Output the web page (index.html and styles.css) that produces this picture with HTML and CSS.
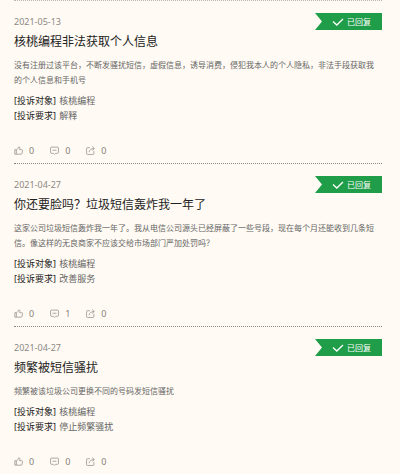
FILE: index.html
```html
<!DOCTYPE html>
<html lang="zh-CN">
<head>
<meta charset="utf-8">
<meta name="viewport" content="width=device-width, initial-scale=1">
<title>投诉列表</title>
<link rel="stylesheet" href="styles.css">
</head>
<body>
<svg class="sprite" aria-hidden="true">
  <symbol id="like" viewBox="0 0 16 16"><path d="M4 6.500H1.500v8H12.500c1 0 1.500-.5 1.700-1.500l1-4.500c.2-1.200-.4-2-1.500-2H10c.8-3 .5-5-1-5-1.200 0-1.300 1-1.600 2C6.800 5.200 5.500 6.500 4 6.500z"/><path d="M4.200 7v7"/></symbol>
  <symbol id="comment" viewBox="0 0 16 16"><path d="M2.500 2h11c.8 0 1.500.5 1.500 1.500v8c0 .8-.5 1.500-1.500 1.500H10l-2 2-2-2H2.500c-1 0-1.500-.7-1.500-1.500v-8C1 2.500 1.700 2 2.500 2zM4.500 7.500h7"/></symbol>
  <symbol id="share" viewBox="0 0 16 16"><path d="M7 3H2.500C1.500 3 1 3.500 1 4.500v9c0 1 .5 1.500 1.500 1.500h10c1 0 1.500-.5 1.500-1.500V9M5.500 11C6 7 9 4.500 14.500 4.500M11 1l3.800 3.500L11 8"/></symbol>
  <symbol id="check" viewBox="0 0 12 8"><path d="M1 3.500 4.800 7 11 1"/></symbol>
</svg>
<main class="list">
  <article class="item">
    <header class="head"><time class="date">2021-05-13</time><span class="badge"><svg class="check"><use href="#check"/></svg>已回复</span></header>
    <h2 class="title">核桃编程非法获取个人信息</h2>
    <p class="text">没有注册过该平台，不断发骚扰短信，虚假信息，诱导消费，侵犯我本人的个人隐私，非法手段获取我的个人信息和手机号</p>
    <dl class="facts">
      <div><dt>[投诉对象]</dt> <dd>核桃编程</dd></div>
      <div><dt>[投诉要求]</dt> <dd>解释</dd></div>
    </dl>
    <footer class="actions">
      <button class="action" aria-label="点赞 0"><svg class="icon"><use href="#like"/></svg>0</button>
      <button class="action" aria-label="评论 0"><svg class="icon"><use href="#comment"/></svg>0</button>
      <button class="action" aria-label="分享 0"><svg class="icon"><use href="#share"/></svg>0</button>
    </footer>
  </article>
  <article class="item">
    <header class="head"><time class="date">2021-04-27</time><span class="badge"><svg class="check"><use href="#check"/></svg>已回复</span></header>
    <h2 class="title">你还要脸吗？垃圾短信轰炸我一年了</h2>
    <p class="text">这家公司垃圾短信轰炸我一年了。我从电信公司源头已经屏蔽了一些号段，现在每个月还能收到几条短信。像这样的无良商家不应该交给市场部门严加处罚吗？</p>
    <dl class="facts">
      <div><dt>[投诉对象]</dt> <dd>核桃编程</dd></div>
      <div><dt>[投诉要求]</dt> <dd>改善服务</dd></div>
    </dl>
    <footer class="actions">
      <button class="action" aria-label="点赞 0"><svg class="icon"><use href="#like"/></svg>0</button>
      <button class="action" aria-label="评论 1"><svg class="icon"><use href="#comment"/></svg>1</button>
      <button class="action" aria-label="分享 0"><svg class="icon"><use href="#share"/></svg>0</button>
    </footer>
  </article>
  <article class="item">
    <header class="head"><time class="date">2021-04-27</time><span class="badge"><svg class="check"><use href="#check"/></svg>已回复</span></header>
    <h2 class="title">频繁被短信骚扰</h2>
    <p class="text">频繁被该垃圾公司更换不同的号码发短信骚扰</p>
    <dl class="facts">
      <div><dt>[投诉对象]</dt> <dd>核桃编程</dd></div>
      <div><dt>[投诉要求]</dt> <dd>停止频繁骚扰</dd></div>
    </dl>
    <footer class="actions">
      <button class="action" aria-label="点赞 0"><svg class="icon"><use href="#like"/></svg>0</button>
      <button class="action" aria-label="评论 0"><svg class="icon"><use href="#comment"/></svg>0</button>
      <button class="action" aria-label="分享 0"><svg class="icon"><use href="#share"/></svg>0</button>
    </footer>
  </article>
</main>
</body>
</html>
```
FILE: styles.css
```css
* { box-sizing: border-box; }

body {
  margin: 0;
  background: #fffaf3;
  color: #666;
  font-family: "Noto Sans", "Noto Sans CJK SC", sans-serif;
  font-size: 9px;
  line-height: 15px;
}

.sprite { display: none; }

.list {
  margin: 0 18px 0 14px;
  border-top: 1px dotted #bbb7b0;
}

.item {
  padding: 12px 0 5px;
  border-bottom: 1px dotted #8c8984;
}

.item:last-child { border-bottom: 0; }

.head {
  display: flex;
  justify-content: space-between;
  align-items: center;
}

.date { color: #8c8984; }

.badge {
  display: flex;
  align-items: center;
  justify-content: flex-end;
  gap: 3px;
  width: 67px;
  height: 17px;
  padding-right: 11px;
  background: #1f9d49;
  clip-path: polygon(0 0, 100% 0, 100% 100%, 0 100%, 7px 50%);
  color: #fff;
  font-size: 8px;
}

.check {
  width: 12px;
  height: 8px;
  fill: none;
  stroke: #fff;
  stroke-width: 1.3;
}

.title {
  margin: 2px 0 5px;
  color: #222;
  font-size: 12px;
  font-weight: 400;
  line-height: 20px;
}

.text {
  margin: 0 0 6px;
  padding-right: 5px;
  font-size: 8px;
}

.facts { margin: 0 0 20px; }

.facts dt,
.facts dd {
  display: inline;
  margin: 0;
}

.facts dt { color: #222; }

.facts dd { margin-left: 1px; }

.actions {
  display: flex;
  gap: 16px;
}

.action {
  display: flex;
  align-items: center;
  gap: 6px;
  padding: 0;
  border: 0;
  background: none;
  color: #85827d;
  font: inherit;
}

.icon {
  width: 9px;
  height: 9px;
  fill: none;
  stroke: #96928c;
  stroke-width: 1.4;
}
```
